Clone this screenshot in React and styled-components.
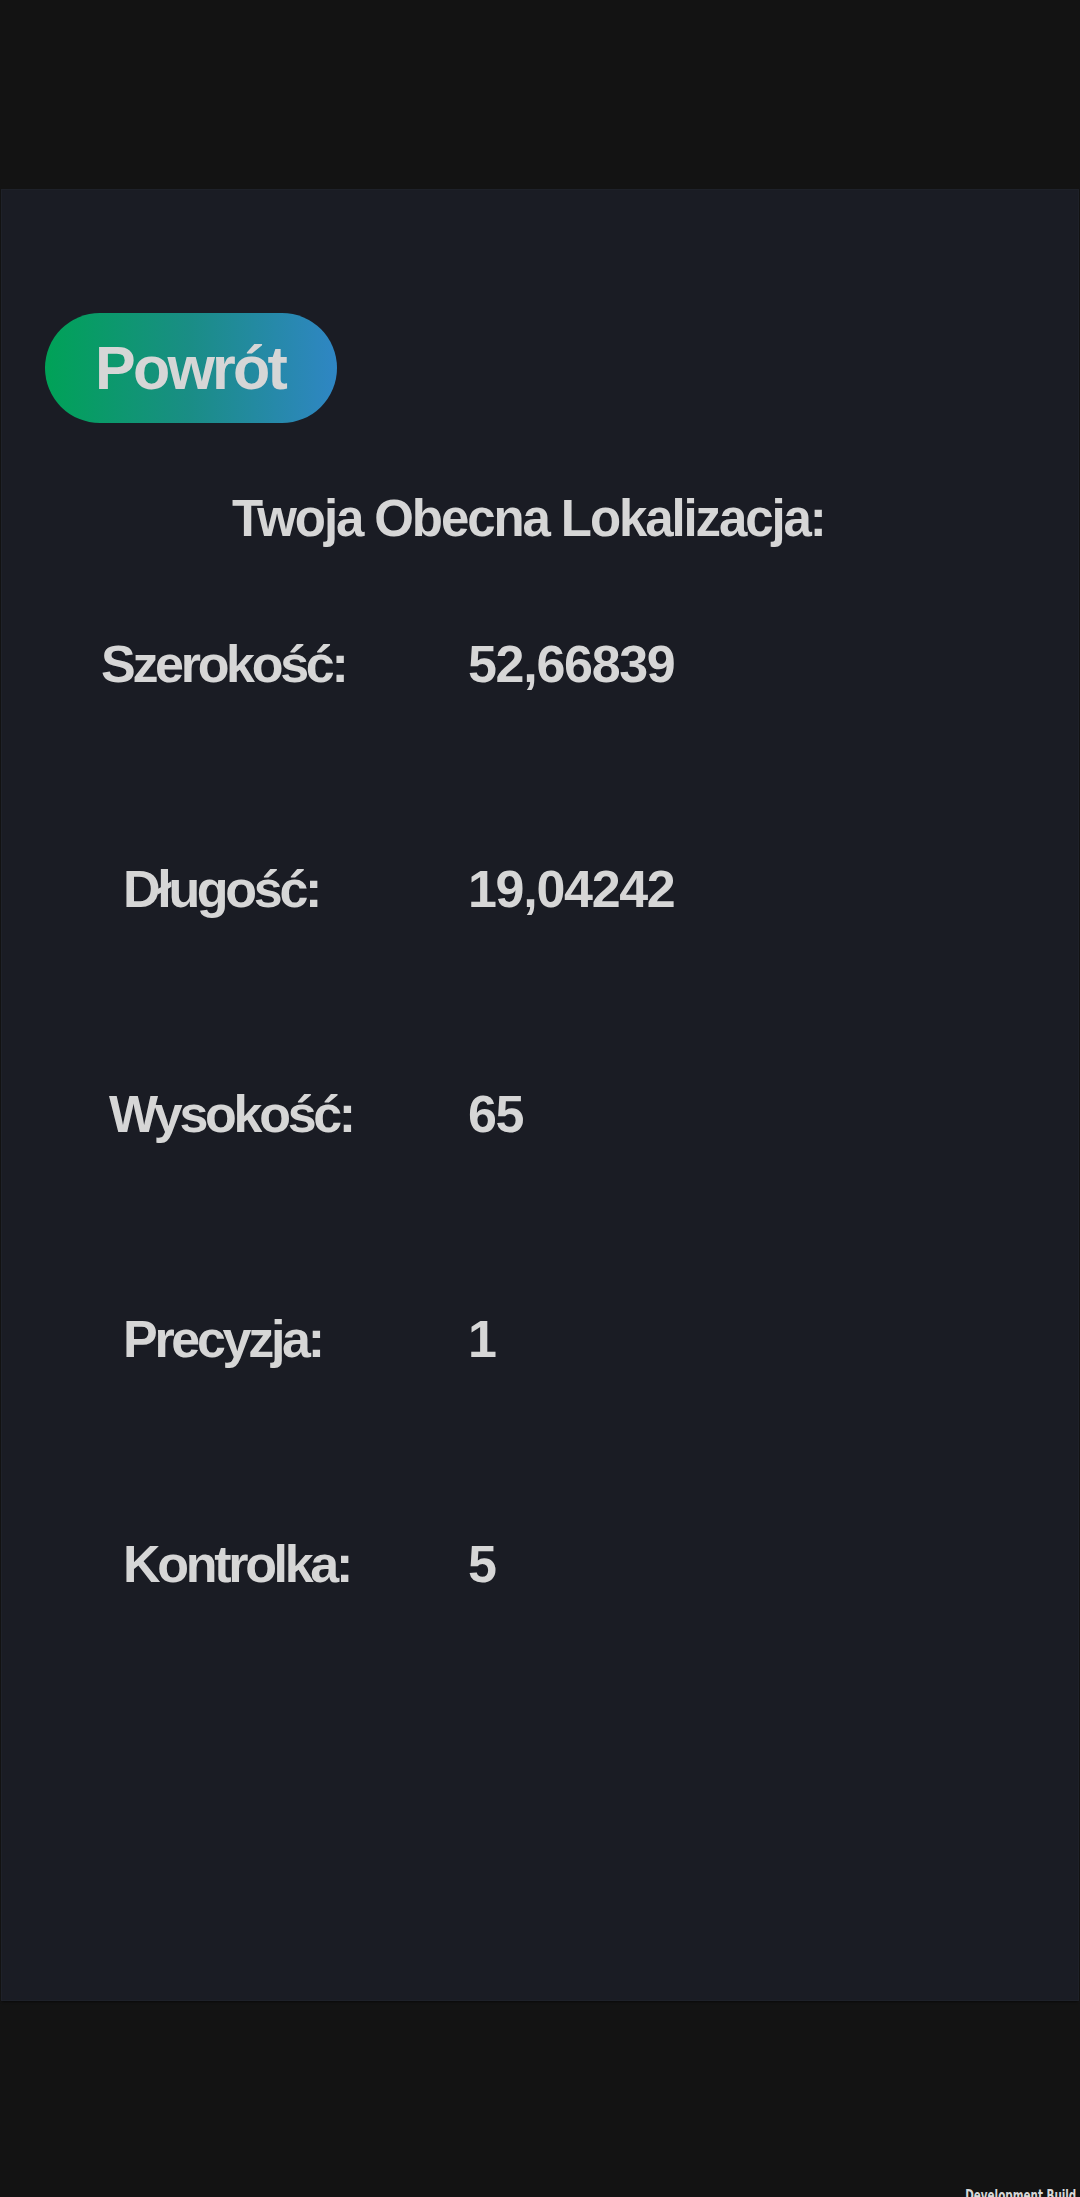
import styled, { createGlobalStyle } from "styled-components";

const Global = createGlobalStyle`
    html, body {
        margin: 0;
        padding: 0;
        background: #131313;
    }
    body {
        font-family: "Liberation Sans", Arial, sans-serif;
    }
`

const Pantalla = styled.div`
    position: relative;
    width: 1080px;
    height: 2197px;
    box-sizing: border-box;
    padding-top: 190px;
    background-color: #131313;
    overflow: hidden;
`
const Panel = styled.main`
    box-sizing: border-box;
    height: 1810px;
    margin: 0 2px;
    background-color: #1a1c24;
    box-shadow: 0 0 0 1px #1e2129, 0 2px 2px rgba(0, 0, 0, 0.5);
    padding: 123px 0 0 43px;
    display: flex;
    flex-direction: column;
`
const Boton = styled.button`
    width: 292px;
    height: 110px;
    border: none;
    border-radius: 55px;
    background: linear-gradient(90deg, #00a257 0%, #1a8d86 50%, #2f86c4 100%);
    color: #d6d6d6;
    font-family: "Liberation Sans", Arial, sans-serif;
    font-size: 61px;
    font-weight: bold;
    letter-spacing: -2.8px;
    padding: 0 2px 0 0;
    line-height: 1;
    cursor: pointer;
    align-self: flex-start;
`
const Titulo = styled.h1`
    margin: 70px 0 0 0;
    padding-left: 187px;
    font-size: 51px;
    line-height: 51px;
    font-weight: bold;
    letter-spacing: -2.1px;
    color: #d6d6d6;
`
const Lista = styled.section`
    margin: 94px 0 0 -43px;
    display: flex;
    flex-direction: column;
    gap: 173px;
`
const Fila = styled.div`
    display: grid;
    grid-template-columns: 466px 1fr;
    height: 52px;
    font-size: 52px;
    line-height: 52px;
    font-weight: bold;
    color: #d6d6d6;
`
const Etiqueta = styled.span`
    padding-left: ${({ $sangria }) => $sangria}px;
    letter-spacing: -3.3px;
`
const Valor = styled.span`
    letter-spacing: -1.3px;
`

const Marca = styled.div`
    position: absolute;
    right: 4px;
    bottom: -8px;
    font-family: "DejaVu Sans Condensed", "Liberation Sans Narrow", sans-serif;
    font-size: 16px;
    font-weight: bold;
    color: #d8d8d8;
    transform: scaleX(0.72);
    transform-origin: right;
`

const datos = [
    { etiqueta: "Szerokość:", valor: "52,66839", sangria: 99 },
    { etiqueta: "Długość:", valor: "19,04242", sangria: 121 },
    { etiqueta: "Wysokość:", valor: "65", sangria: 107 },
    { etiqueta: "Precyzja:", valor: "1", sangria: 121 },
    { etiqueta: "Kontrolka:", valor: "5", sangria: 121 },
]

const App = () => {
    return (
        <Pantalla>
            <Global />
            <Panel>
                <Boton>Powrót</Boton>
                <Titulo>Twoja Obecna Lokalizacja:</Titulo>
                <Lista>
                    {datos.map((d) => (
                        <Fila key={d.etiqueta}>
                            <Etiqueta $sangria={d.sangria}>{d.etiqueta}</Etiqueta>
                            <Valor>{d.valor}</Valor>
                        </Fila>
                    ))}
                </Lista>
            </Panel>
            <Marca>Development Build</Marca>
        </Pantalla>
    )
}

export default App;
